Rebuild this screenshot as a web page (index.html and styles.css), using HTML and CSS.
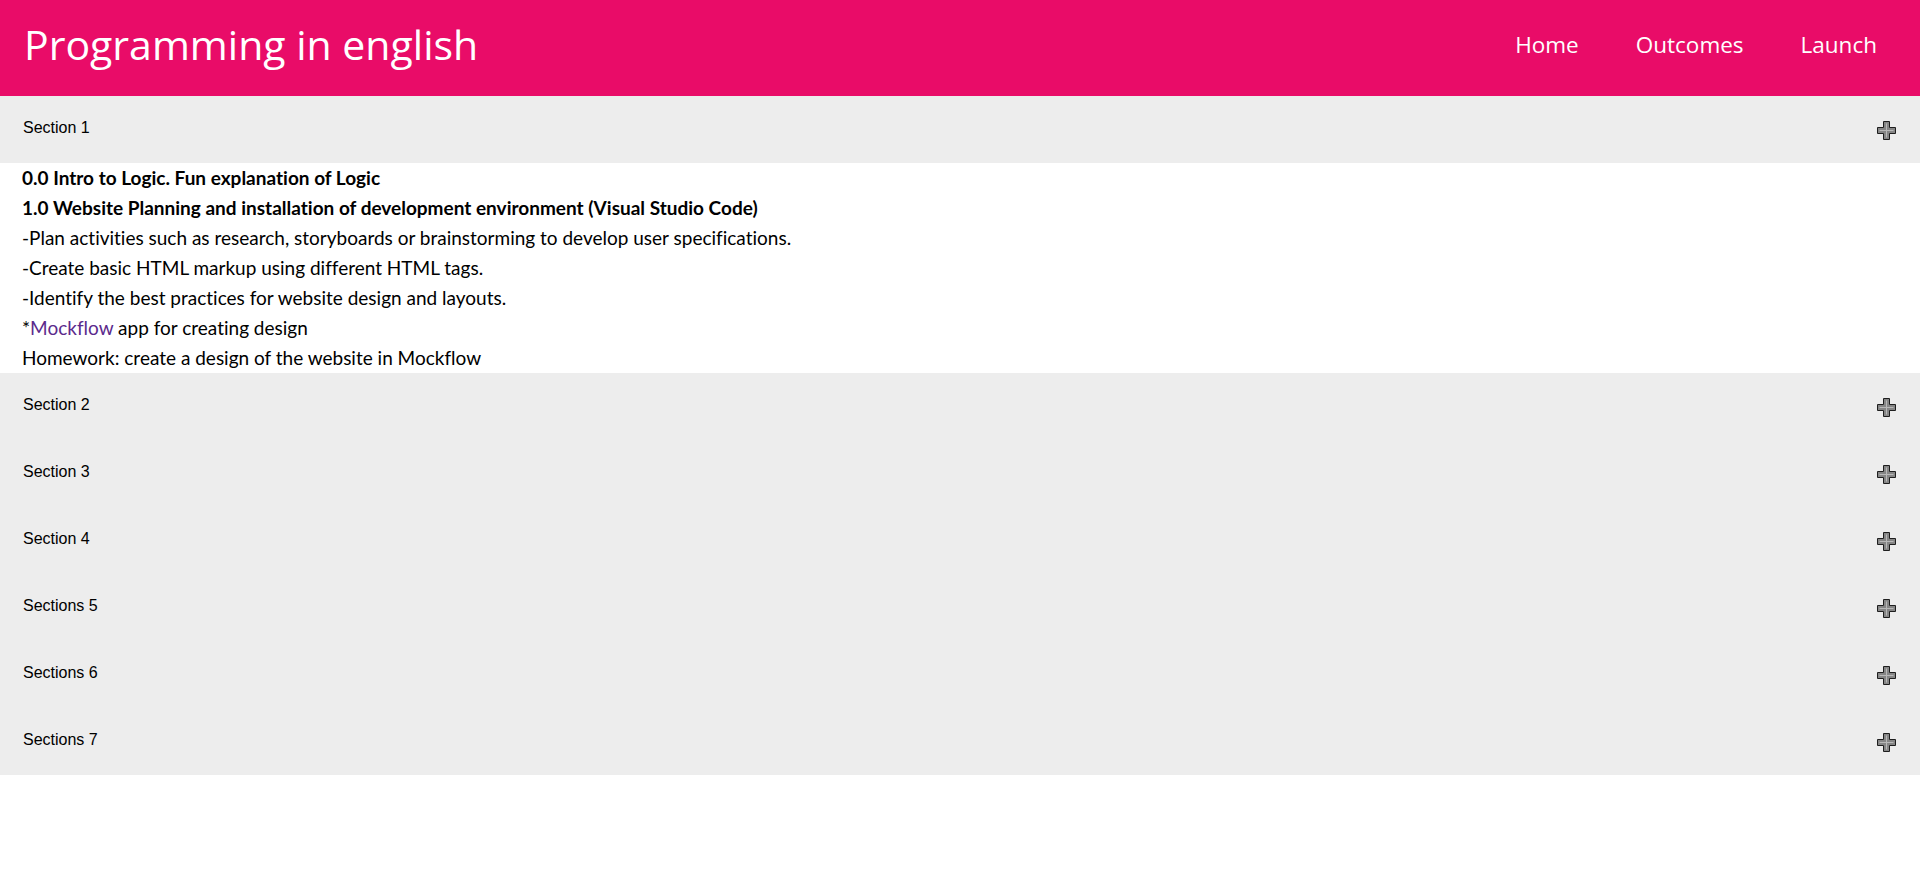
FILE: index.html
```html
<!DOCTYPE html>
<html lang="en">
<head>
<meta charset="utf-8">
<title>Programming in english</title>
<link rel="stylesheet" href="styles.css">
</head>
<body>
<header class="topbar">
  <h1 class="title">Programming in english</h1>
  <nav class="nav">
    <a class="nav-link" href="#">Home</a>
    <a class="nav-link" href="#">Outcomes</a>
    <a class="nav-link" href="#">Launch</a>
  </nav>
</header>
<main class="sections">
  <div class="section-bar"><span class="section-label">Section 1</span><svg class="plus" width="19" height="19" viewBox="0 0 19 19"><path d="M6.5 .5h6v6h6v6h-6v6h-6v-6h-6v-6h6z" fill="#858585" stroke="#1e1e1e"/><path d="M9.5 2.5v14M2.5 9.5h14" stroke="#b8b8b8"/></svg></div>
  <div class="section-body">
    <p class="strong">0.0 Intro to Logic. Fun explanation of Logic</p>
    <p class="strong">1.0 Website Planning and installation of development environment (Visual Studio Code)</p>
    <p>-Plan activities such as research, storyboards or brainstorming to develop user specifications.</p>
    <p>-Create basic HTML markup using different HTML tags.</p>
    <p>-Identify the best practices for website design and layouts.</p>
    <p>*<a class="link" href="#">Mockflow</a> app for creating design</p>
    <p>Homework: create a design of the website in Mockflow</p>
  </div>
  <div class="section-bar"><span class="section-label">Section 2</span><svg class="plus" width="19" height="19" viewBox="0 0 19 19"><path d="M6.5 .5h6v6h6v6h-6v6h-6v-6h-6v-6h6z" fill="#858585" stroke="#1e1e1e"/><path d="M9.5 2.5v14M2.5 9.5h14" stroke="#b8b8b8"/></svg></div>
  <div class="section-bar"><span class="section-label">Section 3</span><svg class="plus" width="19" height="19" viewBox="0 0 19 19"><path d="M6.5 .5h6v6h6v6h-6v6h-6v-6h-6v-6h6z" fill="#858585" stroke="#1e1e1e"/><path d="M9.5 2.5v14M2.5 9.5h14" stroke="#b8b8b8"/></svg></div>
  <div class="section-bar"><span class="section-label">Section 4</span><svg class="plus" width="19" height="19" viewBox="0 0 19 19"><path d="M6.5 .5h6v6h6v6h-6v6h-6v-6h-6v-6h6z" fill="#858585" stroke="#1e1e1e"/><path d="M9.5 2.5v14M2.5 9.5h14" stroke="#b8b8b8"/></svg></div>
  <div class="section-bar"><span class="section-label">Sections 5</span><svg class="plus" width="19" height="19" viewBox="0 0 19 19"><path d="M6.5 .5h6v6h6v6h-6v6h-6v-6h-6v-6h6z" fill="#858585" stroke="#1e1e1e"/><path d="M9.5 2.5v14M2.5 9.5h14" stroke="#b8b8b8"/></svg></div>
  <div class="section-bar"><span class="section-label">Sections 6</span><svg class="plus" width="19" height="19" viewBox="0 0 19 19"><path d="M6.5 .5h6v6h6v6h-6v6h-6v-6h-6v-6h6z" fill="#858585" stroke="#1e1e1e"/><path d="M9.5 2.5v14M2.5 9.5h14" stroke="#b8b8b8"/></svg></div>
  <div class="section-bar"><span class="section-label">Sections 7</span><svg class="plus" width="19" height="19" viewBox="0 0 19 19"><path d="M6.5 .5h6v6h6v6h-6v6h-6v-6h-6v-6h6z" fill="#858585" stroke="#1e1e1e"/><path d="M9.5 2.5v14M2.5 9.5h14" stroke="#b8b8b8"/></svg></div>
</main>
</body>
</html>
```
FILE: styles.css
```css
* { box-sizing: border-box; }
html, body { margin: 0; padding: 0; background: #ffffff; }
body { font-family: Lato, "Liberation Sans", Arial, sans-serif; color: #000; }

.topbar {
  height: 96px;
  background: #e90c68;
  display: flex;
  align-items: center;
  justify-content: space-between;
  padding: 0 43px 7px 24px;
}
.title {
  margin: 0;
  font-family: "Open Sans", "Noto Sans", sans-serif;
  font-weight: 400;
  font-size: 41px;
  color: #fff;
  line-height: 1;
}
.nav { display: flex; gap: 57px; }
.nav-link {
  font-family: "Open Sans", "Noto Sans", sans-serif;
  font-size: 22.5px;
  color: #fff;
  text-decoration: none;
}

.section-bar {
  height: 67px;
  background: #ededed;
  display: flex;
  align-items: center;
  justify-content: space-between;
  padding: 0 24px 3px 23px;
}
.section-label {
  font-family: "Liberation Sans", Arial, sans-serif;
  font-size: 16px;
  color: #000;
}
.plus { display: block; margin-top: 5px; }

.section-body { padding: 0 0 0 22px; }
.section-body p {
  margin: 0;
  font-size: 19px;
  line-height: 30px;
  font-variant-ligatures: no-common-ligatures;
}
.section-body .strong { font-weight: 700; }
.link { color: #5b2a8c; text-decoration: none; }
```
